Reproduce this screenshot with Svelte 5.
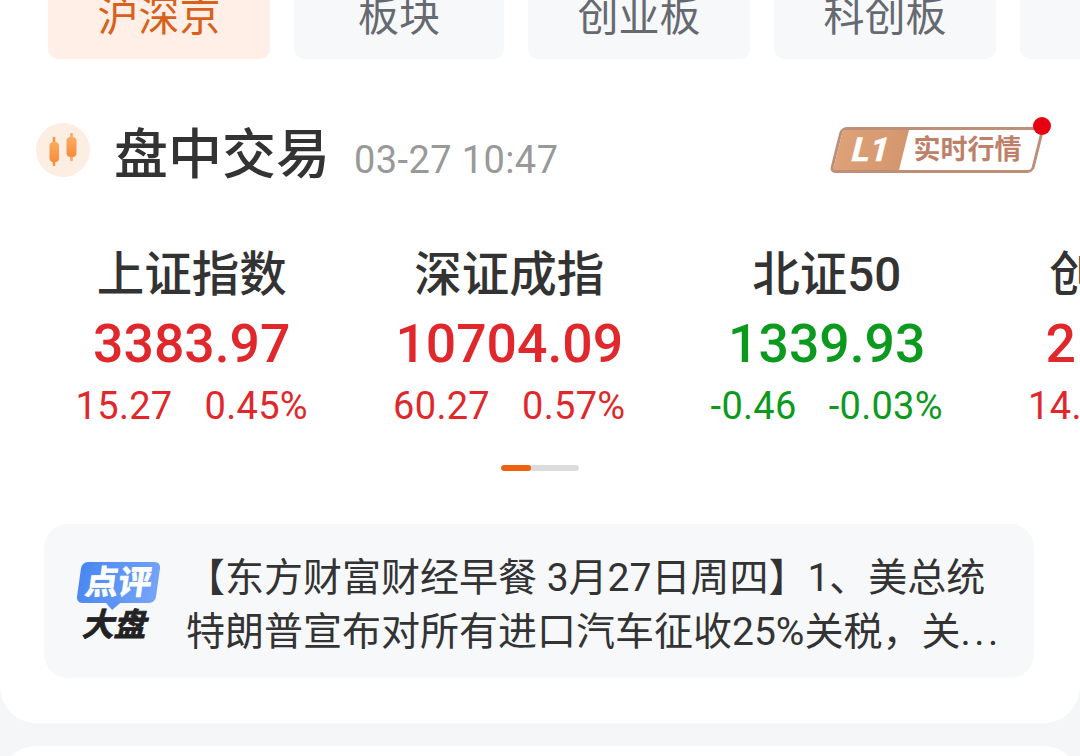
<script>
  const tabs = [
    { name: '沪深京', w: 222, active: true },
    { name: '板块', w: 210 },
    { name: '创业板', w: 222 },
    { name: '科创板', w: 222 },
    { name: '大盘', w: 222 }
  ];

  const indexes = [
    { name: '上证指数', value: '3383.97', change: '15.27', pct: '0.45%', tone: 'up' },
    { name: '深证成指', value: '10704.09', change: '60.27', pct: '0.57%', tone: 'up' },
    { name: '北证50', value: '1339.93', change: '-0.46', pct: '-0.03%', tone: 'down' },
    { name: '创业板指', value: '2145.68', change: '14.32', pct: '0.67%', tone: 'up' }
  ];
</script>

<div class="page">
  <section class="card">
    <div class="tabs">
      {#each tabs as tab}
        <div class="tab" class:active={tab.active} style={`width: ${tab.w}px`}>{tab.name}</div>
      {/each}
    </div>

    <div class="head">
      <div class="head-icon">
        <svg width="30" height="34" viewBox="0 0 30 34">
          <defs>
            <linearGradient id="candle" x1="0" y1="0" x2="0" y2="1">
              <stop offset="0" stop-color="#fbab63" />
              <stop offset="1" stop-color="#f78c38" />
            </linearGradient>
          </defs>
          <path d="M6 5v27" stroke="#f8963f" stroke-width="2.6" stroke-linecap="round" />
          <path d="M23.5 1v26" stroke="#fba65c" stroke-width="2.6" stroke-linecap="round" />
          <rect x="1.5" y="9" width="9.5" height="20" rx="4" fill="url(#candle)" />
          <rect x="18.5" y="4" width="10" height="20" rx="4" fill="url(#candle)" />
        </svg>
      </div>
      <h2>盘中交易</h2>
      <span class="time">03-27 10:47</span>
      <div class="level">
        <span class="level-tag"><i>L1</i></span>
        <span class="level-text">实时行情</span>
        <span class="dot"></span>
      </div>
    </div>

    <div class="indexes">
      {#each indexes as item}
        <div class="index">
          <div class="name">{item.name}</div>
          <div class={`value ${item.tone}`}>{item.value}</div>
          <div class={`sub ${item.tone}`}>
            <span>{item.change}</span>
            <span>{item.pct}</span>
          </div>
        </div>
      {/each}
    </div>

    <div class="pager"><span></span></div>

    <div class="comment">
      <div class="logo">
        <div class="bubble"><b>点评</b></div>
        <b class="logo-sub">大盘</b>
      </div>
      <p>【东方财富财经早餐 3月27日周四】1、美总统<br />特朗普宣布对所有进口汽车征收25%关税，关<span class="more">...</span></p>
    </div>
  </section>
  <section class="card next"></section>
</div>

<style>
  :global(body) {
    margin: 0;
    background: #f5f6f7;
  }

  .page {
    width: 1080px;
    height: 756px;
    overflow: hidden;
    background: #f5f6f7;
    font-family: Roboto, "Noto Sans CJK SC", sans-serif;
  }

  .card {
    background: #fff;
    height: 723px;
    box-sizing: border-box;
    border-radius: 0 0 36px 36px;
    overflow: hidden;
  }

  .card.next {
    height: 60px;
    margin-top: 23px;
    border-radius: 36px 36px 0 0;
  }

  .tabs {
    display: flex;
    gap: 24px;
    height: 59px;
    padding-left: 48px;
  }

  .tab {
    flex: none;
    height: 75px;
    margin-top: -16px;
    background: #f7f8fa;
    border-radius: 10px;
    color: #666a70;
    font-size: 41px;
    line-height: 67px;
    text-align: center;
  }

  .tab.active {
    background: #ffefe6;
    color: #d9601a;
  }

  .head {
    display: flex;
    align-items: center;
    height: 54px;
    margin-top: 64px;
    padding-left: 36px;
  }

  .head-icon {
    flex: none;
    width: 54px;
    height: 54px;
    border-radius: 50%;
    background: #fdeee4;
    display: flex;
    align-items: center;
    justify-content: center;
  }

  h2 {
    margin: 11px 0 0 24px;
    font-size: 54px;
    font-weight: 500;
    line-height: 54px;
    color: #333;
  }

  .time {
    margin: 19px 0 0 24px;
    font-size: 38px;
    letter-spacing: 0.4px;
    color: #999;
  }

  .level {
    position: relative;
    display: flex;
    align-items: stretch;
    width: 204px;
    height: 46px;
    margin: 0 41px 0 auto;
    transform: skewX(-14deg);
    box-sizing: border-box;
    border: 3px solid #bd8e78;
    border-radius: 6px;
  }

  .level-tag {
    width: 66px;
    background: linear-gradient(90deg, #dea277, #d4966e);
    color: #fff;
    text-align: center;
    font-size: 33px;
    font-weight: 700;
    line-height: 40px;
  }

  .level-tag i {
    font-style: normal;
    -webkit-text-stroke: 0.6px #fff;
  }

  .level-text {
    flex: 1;
    padding-right: 5px;
    text-align: center;
    color: #bd8169;
    font-size: 27px;
    font-weight: 700;
    line-height: 40px;
    transform: skewX(14deg);
  }

  .dot {
    position: absolute;
    right: -9px;
    top: -13px;
    width: 18px;
    height: 18px;
    border-radius: 50%;
    background: #e60012;
    transform: skewX(14deg);
  }

  .indexes {
    display: flex;
    margin-top: 62px;
    padding-left: 33px;
  }

  .index {
    flex: none;
    width: 317.5px;
    text-align: center;
  }

  .name {
    font-size: 47.5px;
    font-weight: 500;
    line-height: 72px;
    color: #333;
    white-space: nowrap;
  }

  .value {
    font-size: 53.5px;
    font-weight: 500;
    line-height: 66px;
  }

  .sub {
    display: flex;
    justify-content: center;
    gap: 32px;
    font-size: 38px;
    letter-spacing: 0.3px;
    line-height: 58px;
    white-space: nowrap;
  }

  .up { color: #e0282c; }
  .down { color: #0c9a1e; }

  .pager {
    width: 78px;
    height: 6px;
    margin: 30px 0 0 501px;
    border-radius: 3px;
    background: #dcdcdc;
    overflow: hidden;
  }

  .pager span {
    display: block;
    width: 30px;
    height: 6px;
    border-radius: 3px;
    background: #f0600f;
  }

  .comment {
    display: flex;
    align-items: center;
    box-sizing: border-box;
    width: 990px;
    height: 154px;
    margin: 53px 0 0 44px;
    padding: 0 20px 0 35px;
    border-radius: 24px;
    background: #f7f8fa;
  }

  .logo {
    flex: none;
    width: 79px;
    margin-right: 28px;
    text-align: center;
  }

  .bubble {
    position: relative;
    height: 41px;
    border-radius: 6px;
    background: linear-gradient(100deg, #4a86f2, #74a5f7);
    transform: skewX(-8deg);
    color: #fff;
    font-size: 33px;
    line-height: 41px;
  }

  .bubble::after {
    content: "";
    position: absolute;
    left: 32px;
    bottom: -5px;
    width: 10px;
    height: 10px;
    background: #5c93f4;
    transform: rotate(45deg);
  }

  .bubble b {
    display: block;
    position: relative;
    z-index: 1;
    -webkit-text-stroke: 0.8px #fff;
  }

  .logo-sub {
    display: block;
    margin: 6px 0 0 -10px;
    font-size: 32px;
    line-height: 32px;
    font-style: italic;
    color: #222;
    -webkit-text-stroke: 0.8px #222;
  }

  p {
    margin: 8px 0 0;
    flex: 1;
    color: #333;
    font-size: 39px;
    line-height: 54px;
    white-space: nowrap;
  }

  .more {
    letter-spacing: 3.5px;
  }
</style>
